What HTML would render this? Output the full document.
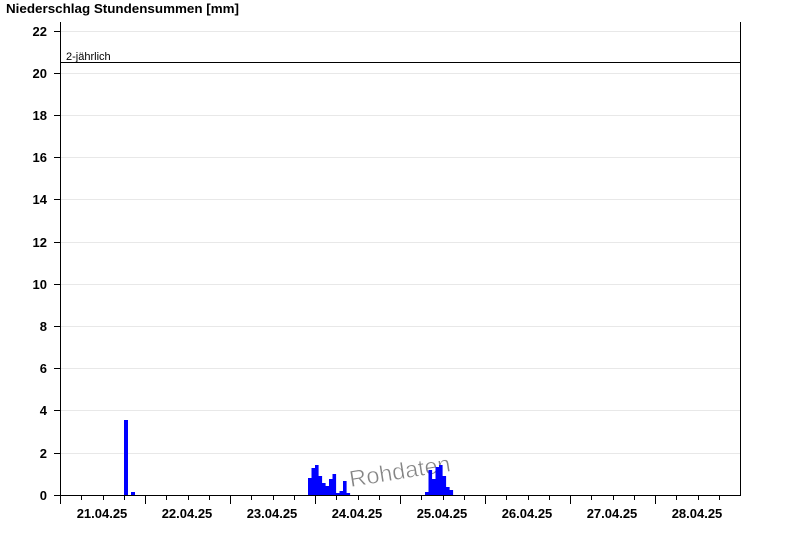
<!DOCTYPE html>
<html><head><meta charset="utf-8"><style>html,body{margin:0;padding:0;background:#fff}svg{display:block}</style></head><body>
<svg width="800" height="550" viewBox="0 0 800 550" xmlns="http://www.w3.org/2000/svg" font-family="Liberation Sans, Arial, sans-serif">
<text x="6" y="13" font-size="13" font-weight="bold" fill="#000" textLength="233" lengthAdjust="spacingAndGlyphs">Niederschlag Stundensummen [mm]</text>
<g stroke="#e8e8e8" stroke-width="1">
<line x1="60" x2="740" y1="31.5" y2="31.5"/><line x1="60" x2="740" y1="73.5" y2="73.5"/><line x1="60" x2="740" y1="115.5" y2="115.5"/><line x1="60" x2="740" y1="157.5" y2="157.5"/><line x1="60" x2="740" y1="199.5" y2="199.5"/><line x1="60" x2="740" y1="242.5" y2="242.5"/><line x1="60" x2="740" y1="284.5" y2="284.5"/><line x1="60" x2="740" y1="326.5" y2="326.5"/><line x1="60" x2="740" y1="368.5" y2="368.5"/><line x1="60" x2="740" y1="410.5" y2="410.5"/><line x1="60" x2="740" y1="453.5" y2="453.5"/>
</g>
<g transform="rotate(-9 400 466)" font-size="23" font-family="Liberation Sans, Arial, sans-serif">
<text x="349" y="480" fill="#ffffff" opacity="0.8" textLength="102" lengthAdjust="spacingAndGlyphs">Rohdaten</text>
<text x="348" y="479" fill="#858585" stroke="#ffffff" stroke-width="0.5" textLength="102" lengthAdjust="spacingAndGlyphs">Rohdaten</text>
</g>
<g fill="#0000ff">
<rect x="124" y="420" width="4" height="75"/><rect x="131" y="492" width="4" height="3"/>
<rect x="308" y="478" width="3.6" height="17"/><rect x="311.5" y="468" width="3.6" height="27"/><rect x="315" y="465" width="3.6" height="30"/><rect x="318.5" y="476" width="3.6" height="19"/><rect x="322" y="483" width="3.6" height="12"/><rect x="325.5" y="486" width="3.6" height="9"/><rect x="329" y="479" width="3.6" height="16"/><rect x="332.5" y="474" width="3.6" height="21"/><rect x="336" y="493" width="3.6" height="2"/><rect x="339.5" y="491" width="3.6" height="4"/><rect x="343" y="481" width="3.6" height="14"/><rect x="346.5" y="493" width="3.6" height="2"/>
<rect x="425" y="492" width="3.6" height="3"/><rect x="428.5" y="470" width="3.6" height="25"/><rect x="432" y="479" width="3.6" height="16"/><rect x="435.5" y="467" width="3.6" height="28"/><rect x="439" y="465" width="3.6" height="30"/><rect x="442.5" y="476" width="3.6" height="19"/><rect x="446" y="487" width="3.6" height="8"/><rect x="449.5" y="490" width="3.6" height="5"/>
</g>
<line x1="60" x2="740" y1="62.5" y2="62.5" stroke="#000"/>
<text x="66" y="60" font-size="11" fill="#000">2-jährlich</text>
<g stroke="#000" stroke-width="1">
<line x1="60.5" x2="60.5" y1="22" y2="495"/>
<line x1="740.5" x2="740.5" y1="22" y2="495"/>
<line x1="60" x2="741" y1="495.5" y2="495.5"/>
<line x1="54" x2="60" y1="31.5" y2="31.5"/><line x1="54" x2="60" y1="73.5" y2="73.5"/><line x1="54" x2="60" y1="115.5" y2="115.5"/><line x1="54" x2="60" y1="157.5" y2="157.5"/><line x1="54" x2="60" y1="199.5" y2="199.5"/><line x1="54" x2="60" y1="242.5" y2="242.5"/><line x1="54" x2="60" y1="284.5" y2="284.5"/><line x1="54" x2="60" y1="326.5" y2="326.5"/><line x1="54" x2="60" y1="368.5" y2="368.5"/><line x1="54" x2="60" y1="410.5" y2="410.5"/><line x1="54" x2="60" y1="453.5" y2="453.5"/><line x1="54" x2="60" y1="495.5" y2="495.5"/>
<line x1="60.5" x2="60.5" y1="495" y2="504"/><line x1="145.5" x2="145.5" y1="495" y2="504"/><line x1="230.5" x2="230.5" y1="495" y2="504"/><line x1="315.5" x2="315.5" y1="495" y2="504"/><line x1="400.5" x2="400.5" y1="495" y2="504"/><line x1="485.5" x2="485.5" y1="495" y2="504"/><line x1="570.5" x2="570.5" y1="495" y2="504"/><line x1="655.5" x2="655.5" y1="495" y2="504"/>
</g>
<g stroke="#000" stroke-width="1">
<line x1="81.5" x2="81.5" y1="495" y2="500"/><line x1="103.5" x2="103.5" y1="495" y2="500"/><line x1="124.5" x2="124.5" y1="495" y2="500"/>
<line x1="166.5" x2="166.5" y1="495" y2="500"/><line x1="188.5" x2="188.5" y1="495" y2="500"/><line x1="209.5" x2="209.5" y1="495" y2="500"/>
<line x1="251.5" x2="251.5" y1="495" y2="500"/><line x1="273.5" x2="273.5" y1="495" y2="500"/><line x1="294.5" x2="294.5" y1="495" y2="500"/>
<line x1="336.5" x2="336.5" y1="495" y2="500"/><line x1="358.5" x2="358.5" y1="495" y2="500"/><line x1="379.5" x2="379.5" y1="495" y2="500"/>
<line x1="421.5" x2="421.5" y1="495" y2="500"/><line x1="443.5" x2="443.5" y1="495" y2="500"/><line x1="464.5" x2="464.5" y1="495" y2="500"/>
<line x1="506.5" x2="506.5" y1="495" y2="500"/><line x1="528.5" x2="528.5" y1="495" y2="500"/><line x1="549.5" x2="549.5" y1="495" y2="500"/>
<line x1="591.5" x2="591.5" y1="495" y2="500"/><line x1="613.5" x2="613.5" y1="495" y2="500"/><line x1="634.5" x2="634.5" y1="495" y2="500"/>
<line x1="676.5" x2="676.5" y1="495" y2="500"/><line x1="698.5" x2="698.5" y1="495" y2="500"/><line x1="719.5" x2="719.5" y1="495" y2="500"/>
</g>
<g font-size="13" font-weight="bold" fill="#000" text-anchor="end">
<text x="47" y="36">22</text><text x="47" y="78">20</text><text x="47" y="120">18</text><text x="47" y="162">16</text><text x="47" y="204">14</text><text x="47" y="247">12</text><text x="47" y="289">10</text><text x="47" y="331">8</text><text x="47" y="373">6</text><text x="47" y="415">4</text><text x="47" y="458">2</text><text x="47" y="500">0</text>
</g>
<g font-size="13" font-weight="bold" fill="#000" text-anchor="middle">
<text x="102" y="518">21.04.25</text><text x="187" y="518">22.04.25</text><text x="272" y="518">23.04.25</text><text x="357" y="518">24.04.25</text><text x="442" y="518">25.04.25</text><text x="527" y="518">26.04.25</text><text x="612" y="518">27.04.25</text><text x="697" y="518">28.04.25</text>
</g>
</svg>
</body></html>
